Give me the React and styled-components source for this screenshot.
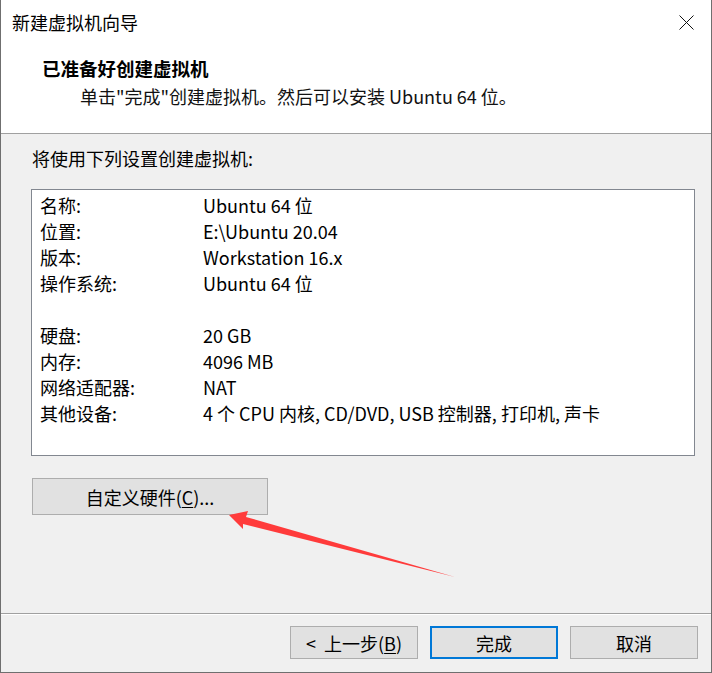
import React from "react";
import styled, { createGlobalStyle } from "styled-components";

const GlobalStyle = createGlobalStyle`
  html, body {
    margin: 0;
    padding: 0;
    background: #ffffff;
  }
  body {
    font-family: "Noto Sans CJK SC", "Noto Sans", sans-serif;
    -webkit-font-smoothing: antialiased;
  }
`;

const Window = styled.div`
  position: relative;
  width: 712px;
  height: 673px;
  box-sizing: border-box;
  border: 1px solid #6f6f6f;
  border-top: none;
  background: #f0f0f0;
  color: #000;
  font-size: 18px;
  display: flex;
  flex-direction: column;
`;

const TitleBar = styled.div`
  height: 44px;
  background: #fff;
  display: flex;
  align-items: center;
  justify-content: space-between;
  padding: 0 17px 0 11px;
`;

const Title = styled.span`
  font-size: 18px;
  line-height: 24px;
`;

const CloseIcon = styled.svg`
  width: 15px;
  height: 15px;
  display: block;
`;

const Header = styled.div`
  height: 89px;
  background: #fff;
  border-bottom: 1px solid #a0a0a0;
  padding-left: 41px;
  display: flex;
  flex-direction: column;
`;

const Heading = styled.div`
  margin-top: 12px;
  font-size: 18.5px;
  font-weight: 700;
  line-height: 24px;
`;

const Subtitle = styled.div`
  margin-top: 4px;
  padding-left: 38px;
  line-height: 24px;
  color: #111;
`;

const Body = styled.div`
  flex: 1;
  padding: 0 16px 0 30px;
  display: flex;
  flex-direction: column;
`;

const Prompt = styled.div`
  margin-top: 12px;
  line-height: 24px;
  padding-left: 1px;
`;

const ListBox = styled.div`
  margin-top: 19px;
  height: 267px;
  box-sizing: border-box;
  border: 1px solid #828790;
  background: #fff;
  padding: 2px 0 0 8px;
`;

const Row = styled.div`
  display: grid;
  grid-template-columns: 163px 1fr;
  height: 26px;
  line-height: 26px;
  white-space: nowrap;
`;

const Button = styled.button`
  box-sizing: border-box;
  width: ${p => p.$width || 128}px;
  height: ${p => p.$height || 33}px;
  background: #e1e1e1;
  border: ${p => (p.$primary ? "2px solid #0078d7" : "1px solid #adadad")};
  font-family: inherit;
  font-size: 18px;
  color: #000;
  padding: 0;
  margin: 0;
  display: flex;
  align-items: center;
  justify-content: center;
  line-height: 1;
  white-space: pre;
`;

const CustomButton = styled(Button)`
  margin-top: 22px;
  margin-left: 1px;
`;

const Key = styled.span`
  text-decoration: underline;
  text-underline-offset: 2px;
`;

const Footer = styled.div`
  height: 59px;
  box-sizing: border-box;
  border-top: 1px solid #a0a0a0;
  box-shadow: inset 0 1px 0 #ffffff;
  display: flex;
  justify-content: flex-end;
  align-items: flex-start;
  gap: 12px;
  padding: 12px 13px 0 0;
`;

const Overlay = styled.svg`
  position: absolute;
  left: 0;
  top: 0;
  width: 712px;
  height: 673px;
  pointer-events: none;
`;

const rows = [
  ["名称:", "Ubuntu 64 位"],
  ["位置:", "E:\\Ubuntu 20.04"],
  ["版本:", "Workstation 16.x"],
  ["操作系统:", "Ubuntu 64 位"],
  ["", ""],
  ["硬盘:", "20 GB"],
  ["内存:", "4096 MB"],
  ["网络适配器:", "NAT"],
  ["其他设备:", "4 个 CPU 内核, CD/DVD, USB 控制器, 打印机, 声卡"]
];

export default function App() {
  return (
    <>
      <GlobalStyle />
      <Window>
        <TitleBar>
          <Title>新建虚拟机向导</Title>
          <CloseIcon viewBox="0 0 15 15">
            <path d="M0.5 0.5 L14.5 14.5 M14.5 0.5 L0.5 14.5" stroke="#111" strokeWidth="1" fill="none" />
          </CloseIcon>
        </TitleBar>
        <Header>
          <Heading>已准备好创建虚拟机</Heading>
          <Subtitle>单击"完成"创建虚拟机。然后可以安装 Ubuntu 64 位。</Subtitle>
        </Header>
        <Body>
          <Prompt>将使用下列设置创建虚拟机:</Prompt>
          <ListBox>
            {rows.map(([label, value], i) => (
              <Row key={i}>
                <span>{label}</span>
                <span>{value}</span>
              </Row>
            ))}
          </ListBox>
          <CustomButton $width={236} $height={37}>
            自定义硬件(<Key>C</Key>)...
          </CustomButton>
        </Body>
        <Footer>
          <Button>
            {"<  上一步("}<Key>B</Key>)
          </Button>
          <Button $primary>完成</Button>
          <Button>取消</Button>
        </Footer>
        <Overlay viewBox="0 0 712 673">
          <polygon
            points="228,515 247,511 245,517 454,577 242,524 242,529"
            fill="#ff3b3b"
          />
        </Overlay>
      </Window>
    </>
  );
}
